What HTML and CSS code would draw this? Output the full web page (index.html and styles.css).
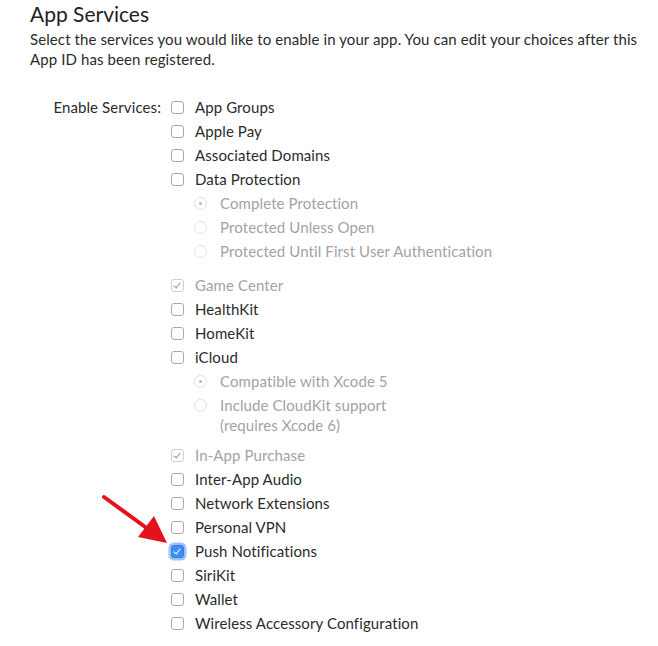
FILE: index.html
```html
<!DOCTYPE html>
<html lang="en">
<head>
  <meta charset="UTF-8" />
  <meta name="viewport" content="width=device-width, initial-scale=1.0"/>
  <title>App Services</title>
  <link rel="stylesheet" href="styles.css">
</head>
<body>

  <h1>App Services</h1>
  <p class="intro">Select the services you would like to enable in your app. You can edit your choices after this App ID has been registered.</p>

  <div class="services">
    <div class="services-label">Enable Services:</div>

    <ul class="service-list">
      <li class="service"><span class="box"></span>App Groups</li>
      <li class="service"><span class="box"></span>Apple Pay</li>
      <li class="service"><span class="box"></span>Associated Domains</li>
      <li class="service"><span class="box"></span>Data Protection</li>
      <li class="options">
        <div class="option"><span class="radio on"></span>Complete Protection</div>
        <div class="option"><span class="radio"></span>Protected Unless Open</div>
        <div class="option"><span class="radio"></span>Protected Until First User Authentication</div>
      </li>
      <li class="service disabled"><span class="box checked"></span>Game Center</li>
      <li class="service"><span class="box"></span>HealthKit</li>
      <li class="service"><span class="box"></span>HomeKit</li>
      <li class="service"><span class="box"></span>iCloud</li>
      <li class="options options-tight">
        <div class="option"><span class="radio on"></span>Compatible with Xcode 5</div>
        <div class="option"><span class="radio"></span><span>Include CloudKit support<br>(requires Xcode 6)</span></div>
      </li>
      <li class="service disabled"><span class="box checked"></span>In-App Purchase</li>
      <li class="service"><span class="box"></span>Inter-App Audio</li>
      <li class="service"><span class="box"></span>Network Extensions</li>
      <li class="service"><span class="box"></span>Personal VPN</li>
      <li class="service"><span class="box checked active"></span>Push Notifications</li>
      <li class="service"><span class="box"></span>SiriKit</li>
      <li class="service"><span class="box"></span>Wallet</li>
      <li class="service"><span class="box"></span>Wireless Accessory Configuration</li>
    </ul>
  </div>

  <!-- pointer towards the push notifications checkbox -->
  <svg class="arrow" width="80" height="60" viewBox="0 0 80 60">
    <line x1="6" y1="6" x2="50" y2="38" stroke="#e3121b" stroke-width="4" stroke-linecap="round"/>
    <polygon points="69,52 40,46 56,25" fill="#e3121b"/>
  </svg>

</body>
</html>
```

FILE: styles.css
```css
body {
  font-family: Lato, "Open Sans", sans-serif;
  color: #2b2b2b;
  letter-spacing: 0.1px;
  margin: 0;
  padding: 0 20px 0 30px;
  position: relative;
}

h1 {
  font-size: 21px;
  font-weight: 400;
  margin: 0;
  padding-top: 1px;
  line-height: 26px;
  letter-spacing: 0;
  color: #222;
}

.intro {
  font-size: 15px;
  line-height: 20px;
  margin: 2px 0 0;
}

.services {
  display: grid;
  grid-template-columns: 131px 1fr;
  column-gap: 10px;
  margin-top: 26px;
  font-size: 15px;
}

.services-label {
  text-align: right;
  line-height: 24px;
}

.service-list {
  list-style: none;
  margin: 0;
  padding: 0;
}

.service,
.option {
  display: flex;
  align-items: center;
  min-height: 24px;
  line-height: 20px;
}

.option {
  align-items: flex-start;
  padding: 2px 0 2px 23px;
  min-height: 20px;
  color: #a3a3a3;
}

.options {
  margin-bottom: 10px;
}

.options-tight {
  margin-bottom: 6px;
}

.disabled {
  color: #a3a3a3;
}

.box {
  width: 13px;
  height: 13px;
  box-sizing: border-box;
  border: 1px solid #a9a9a9;
  border-radius: 3px;
  background: #fff;
  margin-right: 11px;
  flex-shrink: 0;
  position: relative;
}

.box.checked::after {
  content: "";
  position: absolute;
  left: 3px;
  top: 1px;
  width: 3px;
  height: 6px;
  border: solid #999;
  border-width: 0 1.5px 1.5px 0;
  transform: rotate(40deg);
}

.disabled .box {
  border-color: #d0d0d0;
}

.box.active {
  background: #3d8ff6;
  border-color: #2f7ee8;
  box-shadow: 0 0 0 2.5px #9cc3f7;
}

.box.active::after {
  border-color: #fff;
}

.radio {
  width: 13px;
  height: 13px;
  box-sizing: border-box;
  border: 1px solid #e0e0e0;
  border-radius: 50%;
  margin: 4px 13px 0 0;
  flex-shrink: 0;
  position: relative;
}

.radio.on::after {
  content: "";
  position: absolute;
  left: 4px;
  top: 4px;
  width: 3px;
  height: 3px;
  border-radius: 50%;
  background: #b5b5b5;
}

.arrow {
  position: absolute;
  left: 98px;
  top: 491px;
}
```
